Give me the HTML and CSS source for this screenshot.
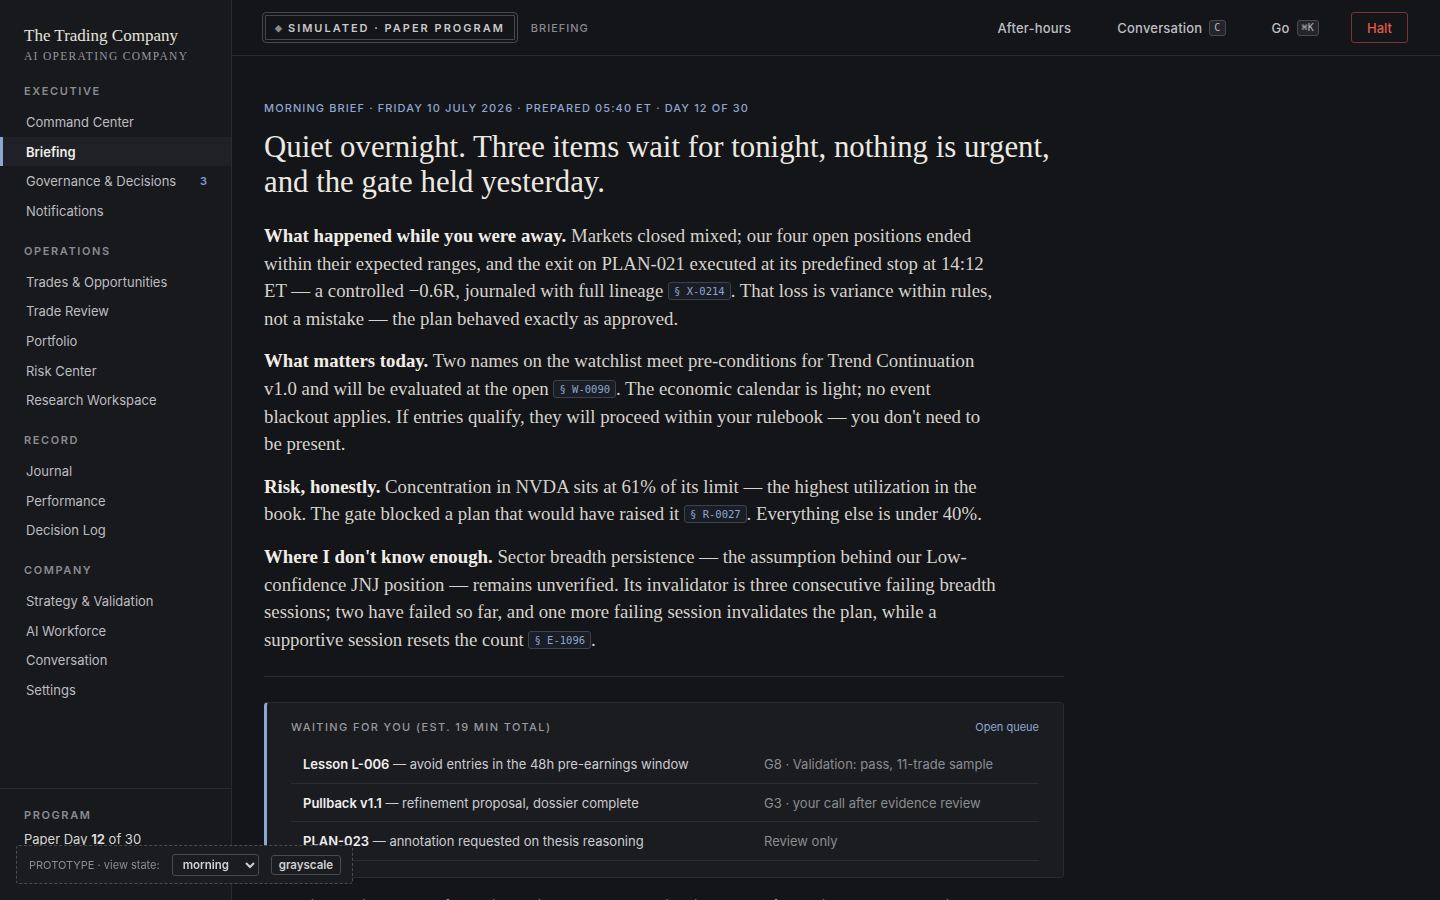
FILE: index.html
```html
<!DOCTYPE html>
<html lang="en">
<head>
    <meta charset="UTF-8">
    <meta name="viewport" content="width=device-width, initial-scale=1.0">
    <title>Briefing · The Trading Company</title>
    <link rel="stylesheet" href="styles.css">
</head>
<body>
    <div class="app">
        <aside class="sidebar">
            <div class="brand">
                <div class="brand-name">The Trading Company</div>
                <div class="brand-sub">AI Operating Company</div>
            </div>

            <nav class="nav">
                <div class="nav-label">Executive</div>
                <a class="nav-item">Command Center</a>
                <a class="nav-item active">Briefing</a>
                <a class="nav-item">Governance &amp; Decisions <span class="count">3</span></a>
                <a class="nav-item">Notifications</a>

                <div class="nav-label">Operations</div>
                <a class="nav-item">Trades &amp; Opportunities</a>
                <a class="nav-item">Trade Review</a>
                <a class="nav-item">Portfolio</a>
                <a class="nav-item">Risk Center</a>
                <a class="nav-item">Research Workspace</a>

                <div class="nav-label">Record</div>
                <a class="nav-item">Journal</a>
                <a class="nav-item">Performance</a>
                <a class="nav-item">Decision Log</a>

                <div class="nav-label">Company</div>
                <a class="nav-item">Strategy &amp; Validation</a>
                <a class="nav-item">AI Workforce</a>
                <a class="nav-item">Conversation</a>
                <a class="nav-item">Settings</a>
            </nav>

            <div class="program">
                <div class="nav-label">Program</div>
                <div class="program-day">Paper Day <b>12</b> of 30</div>
            </div>
        </aside>

        <main class="main">
            <header class="topbar">
                <div class="sim-pill"><span class="diamond">◈</span> Simulated · Paper Program</div>
                <div class="crumb">Briefing</div>
                <div class="top-actions">
                    <a class="top-link">After-hours</a>
                    <a class="top-link">Conversation <kbd>C</kbd></a>
                    <a class="top-link">Go <kbd>⌘K</kbd></a>
                    <button class="halt">Halt</button>
                </div>
            </header>

            <section class="brief">
                <div class="meta">Morning Brief · Friday 10 July 2026 · Prepared 05:40 ET · Day 12 of 30</div>
                <h1>Quiet overnight. Three items wait for tonight, nothing is urgent, and the gate held yesterday.</h1>

                <p><b>What happened while you were away.</b> Markets closed mixed; our four open positions ended within their expected ranges, and the exit on PLAN-021 executed at its predefined stop at 14:12 ET — a controlled −0.6R, journaled with full lineage <span class="ref">§ X-0214</span>. That loss is variance within rules, not a mistake — the plan behaved exactly as approved.</p>

                <p><b>What matters today.</b> Two names on the watchlist meet pre-conditions for Trend Continuation v1.0 and will be evaluated at the open <span class="ref">§ W-0090</span>. The economic calendar is light; no event blackout applies. If entries qualify, they will proceed within your rulebook — you don't need to be present.</p>

                <p><b>Risk, honestly.</b> Concentration in NVDA sits at 61% of its limit — the highest utilization in the book. The gate blocked a plan that would have raised it <span class="ref">§ R-0027</span>. Everything else is under 40%.</p>

                <p><b>Where I don't know enough.</b> Sector breadth persistence — the assumption behind our Low-confidence JNJ position — remains unverified. Its invalidator is three consecutive failing breadth sessions; two have failed so far, and one more failing session invalidates the plan, while a supportive session resets the count <span class="ref">§ E-1096</span>.</p>

                <hr class="rule">

                <div class="queue">
                    <div class="queue-head">
                        <span class="queue-title">Waiting for you (est. 19 min total)</span>
                        <a class="queue-link">Open queue</a>
                    </div>
                    <div class="queue-row">
                        <span class="q-main"><b>Lesson L-006</b> — avoid entries in the 48h pre-earnings window</span>
                        <span class="q-side">G8 · Validation: pass, 11-trade sample</span>
                    </div>
                    <div class="queue-row">
                        <span class="q-main"><b>Pullback v1.1</b> — refinement proposal, dossier complete</span>
                        <span class="q-side">G3 · your call after evidence review</span>
                    </div>
                    <div class="queue-row">
                        <span class="q-main"><b>PLAN-023</b> — annotation requested on thesis reasoning</span>
                        <span class="q-side">Review only</span>
                    </div>
                </div>

                <p class="footnote">Everything else is accounted for: the journal is current, paper capital sits at 100% of allocation, Pullback v1.1 waits on you, and the gate log is clean.</p>
            </section>
        </main>
    </div>

    <div class="proto">
        <span class="proto-label">PROTOTYPE · view state:</span>
        <select class="proto-select">
            <option>morning</option>
            <option>evening</option>
        </select>
        <button class="proto-btn">grayscale</button>
    </div>
</body>
</html>
```

FILE: styles.css
```css
/* General */
* {
    box-sizing: border-box;
}

body {
    margin: 0;
    height: 100vh;
    overflow: hidden;
    background: #141519;
    color: #d6d3cc;
    font-family: 'Inter', 'Liberation Sans', sans-serif;
}

a {
    cursor: pointer;
}

.app {
    display: grid;
    grid-template-columns: 232px 1fr;
    height: 100vh;
}

/* Sidebar */
.sidebar {
    background: #18191d;
    border-right: 1px solid #2a2b30;
    display: flex;
    flex-direction: column;
    height: 100vh;
}

.brand {
    padding: 26px 24px 0;
}

.brand-name {
    font-family: 'Liberation Serif', serif;
    font-size: 17px;
    color: #e6e3dc;
    line-height: 20px;
}

.brand-sub {
    font-family: 'Liberation Serif', serif;
    font-size: 11.5px;
    text-transform: uppercase;
    letter-spacing: 1.3px;
    color: #95969b;
    margin-top: 4px;
}

.nav {
    flex: 1;
    display: flex;
    flex-direction: column;
    padding-top: 19px;
}

.nav-label {
    font-size: 11px;
    font-weight: 600;
    text-transform: uppercase;
    letter-spacing: 1.6px;
    color: #8a8b90;
    padding: 0 24px;
    line-height: 20px;
    margin-bottom: 6px;
}

.nav-item {
    display: flex;
    align-items: center;
    height: 29.7px;
    padding: 0 26px 0 23px;
    font-size: 13px;
    color: #bdbdc0;
    border-left: 3px solid transparent;
}

.nav-item + .nav-label {
    margin-top: 15px;
}

.nav-item.active {
    background: #202126;
    border-left-color: #8ea6d4;
    color: #f0efec;
    font-weight: 600;
}

.count {
    margin-left: auto;
    margin-right: -3px;
    font-size: 11px;
    font-weight: 600;
    color: #7f9dd6;
    width: 8px;
}

.program {
    border-top: 1px solid #2a2b30;
    padding: 16px 24px 53px;
}

.program .nav-label {
    padding: 0;
    margin-bottom: 6px;
}

.program-day {
    font-size: 13px;
    color: #d9d8d4;
}

/* Main */
.main {
    display: flex;
    flex-direction: column;
    min-width: 0;
    overflow: hidden;
}

.topbar {
    height: 56px;
    flex-shrink: 0;
    border-bottom: 1px solid #2a2b30;
    display: flex;
    align-items: center;
    padding: 0 32px 0 30px;
}

.sim-pill {
    height: 31px;
    display: flex;
    align-items: center;
    padding: 0 12px;
    border: 1px solid #46474c;
    border-radius: 4px;
    box-shadow: inset 0 0 0 2px #141519, inset 0 0 0 3px #46474c;
    font-size: 11px;
    font-weight: 600;
    text-transform: uppercase;
    letter-spacing: 2px;
    color: #c9c9cb;
}

.diamond {
    font-size: 9px;
    color: #8b8c91;
    margin-right: 6px;
    letter-spacing: 0;
}

.crumb {
    margin-left: 13px;
    font-size: 11px;
    font-weight: 500;
    text-transform: uppercase;
    letter-spacing: 1px;
    color: #8a8b90;
}

.top-actions {
    margin-left: auto;
    display: flex;
    align-items: center;
    gap: 46px;
}

.top-link {
    font-size: 13px;
    font-weight: 500;
    color: #bfbfc2;
    display: flex;
    align-items: center;
    gap: 7px;
    letter-spacing: 0.2px;
}

kbd {
    font-family: 'DejaVu Sans Mono', monospace;
    font-size: 10px;
    color: #b5b5b8;
    background: #24252a;
    border: 1px solid #4a4b50;
    border-radius: 3px;
    padding: 1px 4px;
    line-height: 12px;
}

.halt {
    margin-left: -14px;
    height: 31px;
    width: 57px;
    background: transparent;
    border: 1px solid #7a3530;
    border-radius: 3px;
    color: #e0594d;
    font-family: inherit;
    font-size: 13px;
    font-weight: 500;
    cursor: pointer;
}

/* Brief */
.brief {
    padding: 45px 32px 0;
    width: 864px;
}

.meta {
    font-size: 11px;
    font-weight: 500;
    text-transform: uppercase;
    letter-spacing: 1.1px;
    color: #8ea6d0;
}

h1 {
    font-family: 'Liberation Serif', serif;
    font-weight: 400;
    font-size: 30.8px;
    line-height: 35px;
    color: #ece9e2;
    margin: 15px 0 22px;
}

p {
    font-family: 'Liberation Serif', serif;
    font-size: 18.8px;
    line-height: 27.6px;
    color: #d6d3cc;
    max-width: 734px;
    margin: 0 0 15px;
}

p b {
    color: #f1eee7;
}

.ref {
    font-family: 'DejaVu Sans Mono', monospace;
    font-size: 10.5px;
    line-height: 14px;
    color: #8ea6d0;
    background: #1a1d24;
    border: 1px solid #3a4252;
    border-radius: 3px;
    padding: 1px 5px;
    vertical-align: 2px;
    display: inline-block;
}

.rule {
    border: 0;
    border-top: 1px solid #2a2b30;
    margin: 23px 0 25px;
}

/* Queue */
.queue {
    background: #1b1c20;
    border: 1px solid #2a2b30;
    border-left: 3px solid #8ea6d4;
    border-radius: 4px;
    padding: 17px 24px 16px 24px;
}

.queue-head {
    display: flex;
    justify-content: space-between;
    align-items: center;
    margin-bottom: 11px;
}

.queue-title {
    font-size: 11px;
    font-weight: 500;
    text-transform: uppercase;
    letter-spacing: 1.4px;
    color: #98999d;
}

.queue-link {
    font-size: 11px;
    color: #8ea6d4;
}

.queue-row {
    display: flex;
    align-items: center;
    height: 38.5px;
    border-bottom: 1px solid #2c2d32;
    padding-left: 12px;
    font-size: 13px;
}

.q-main {
    width: 461px;
    color: #cdcdd0;
}

.q-main b {
    font-weight: 600;
    color: #efeff0;
}

.q-side {
    color: #8b8c90;
}

.footnote {
    font-family: 'Inter', 'Liberation Sans', sans-serif;
    font-size: 13px;
    color: #9a9b9f;
    margin-top: 14px;
    max-width: none;
}

/* Prototype switcher */
.proto {
    position: fixed;
    left: 16px;
    bottom: 16px;
    width: 337px;
    height: 39px;
    display: flex;
    align-items: center;
    padding: 0 12px;
    background: #1b1c20;
    border: 1px dashed #4a4b50;
    border-radius: 3px;
}

.proto-label {
    font-size: 11px;
    color: #8b8c90;
    margin-right: 12px;
    white-space: nowrap;
    flex-shrink: 0;
}

.proto-select {
    flex-shrink: 0;
    width: 87px;
    height: 22px;
    background: #1b1c20;
    color: #d0d0d2;
    border: 1px solid #4a4b50;
    border-radius: 3px;
    font-family: inherit;
    font-size: 11.5px;
    font-weight: 600;
    padding: 0 6px;
    margin-right: 12px;
}

.proto-btn {
    flex-shrink: 0;
    height: 20px;
    background: #1b1c20;
    color: #d0d0d2;
    border: 1px solid #4a4b50;
    border-radius: 3px;
    font-family: inherit;
    font-size: 11.5px;
    font-weight: 600;
    padding: 0 7px;
}
```
